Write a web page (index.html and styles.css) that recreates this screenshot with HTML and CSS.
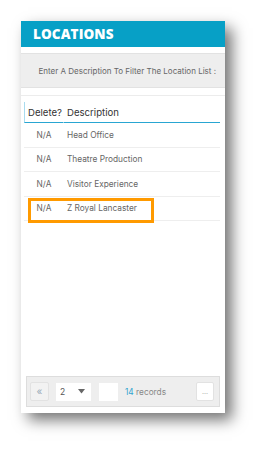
FILE: index.html
```html
<html>
<head>
<title>Locations</title>
<link rel="stylesheet" href="styles.css">
<meta http-equiv="Content-Type" content="text/html; charset=UTF-8">
</head>
<body>
<div class="panel">
  <div class="panel-title">LOCATIONS</div>
  <div class="filter-band">Enter A Description To Filter The Location List :</div>
  <div class="divider"></div>
  <div class="grid-wrap">
    <table class="grid">
      <tr class="grid-head">
        <th class="col-delete">Delete?</th>
        <th class="col-desc">Description</th>
      </tr>
      <tr><td class="cell-na">N/A</td><td class="cell-desc">Head Office</td></tr>
      <tr><td class="cell-na">N/A</td><td class="cell-desc">Theatre Production</td></tr>
      <tr><td class="cell-na">N/A</td><td class="cell-desc">Visitor Experience</td></tr>
      <tr><td class="cell-na">N/A</td><td class="cell-desc">Z Royal Lancaster</td></tr>
    </table>
    <div class="highlight"></div>
  </div>
  <div class="spacer"></div>
  <div class="pager">
    <div class="pager-btn first">&laquo;</div>
    <div class="pager-select">
      <span>2</span>
      <svg width="7" height="5" viewBox="0 0 7 5"><path d="M0 0 L7 0 L3.5 4.5 Z" fill="#666"/></svg>
    </div>
    <div class="pager-blank"></div>
    <div class="pager-count"><span class="count-num">14</span> records</div>
    <div class="pager-btn more">...</div>
  </div>
</div>
</body>
</html>
```

FILE: styles.css
```css
body {
 margin: 0;
 background: #ffffff;
 font-family: Inter, "Noto Sans", Arial, sans-serif;
}
.panel {
 margin: 21px 0 0 21px;
 width: 204px;
 height: 392px;
 background: #ffffff;
 box-shadow: 7px 7px 14px rgba(0,0,0,0.55);
 display: flex;
 flex-direction: column;
}
.panel-title {
 height: 26px;
 line-height: 27px;
 background: #07a0c6;
 color: #ffffff;
 font-family: "Open Sans", Inter, Arial, sans-serif;
 font-size: 13.5px;
 font-weight: 800;
 padding-left: 12px;
 letter-spacing: 0.1px;
}
.filter-band {
 margin-top: 6px;
 height: 33px;
 line-height: 34px;
 background: #eeeeee;
 border-top: 1px solid #e2e2e2;
 border-bottom: 1px solid #e2e2e2;
 color: #666666;
 font-size: 8px;
 text-align: right;
 padding-right: 9px;
}
.divider {
 margin-top: 7px;
 border-top: 1px solid #ececec;
}
.grid-wrap {
 position: relative;
 margin: 6px 5px 0 3px;
}
.grid {
 width: 100%;
 border-collapse: separate;
 border-spacing: 0;
}
.grid th {
 height: 21px;
 padding: 0;
 text-align: left;
 font-weight: normal;
 font-size: 9.6px;
 color: #333333;
 border-bottom: 1px solid #29a6d2;
}
.grid th.col-delete {
 width: 35px;
 padding-left: 3px;
 border-left: 1px solid #a9dcef;
 border-right: 1px solid #ffffff;
}
.grid th.col-desc {
 padding-left: 3px;
}
.grid td {
 height: 24.5px;
 padding: 0;
 font-size: 8.3px;
 color: #666666;
 border-bottom: 1px solid #eeeeee;
}
.grid td.cell-na {
 text-align: center;
}
.grid td.cell-desc {
 padding-left: 3px;
}
.highlight {
 position: absolute;
 left: 4px;
 top: 96px;
 width: 120px;
 height: 19px;
 border: 3px solid #ff9a00;
}
.spacer {
 flex: 1;
}
.pager {
 margin: 0 5px 6px 5px;
 height: 29px;
 background: #eeeeee;
 border: 1px solid #dddddd;
 display: flex;
 align-items: center;
 padding: 0 5px 0 3px;
 font-size: 8.3px;
 color: #888888;
}
.pager-btn {
 height: 17px;
 line-height: 17px;
 text-align: center;
 border: 1px solid #e2e2e2;
 border-radius: 2px;
}
.pager-btn.first {
 width: 17px;
 background: #f2f2f2;
 color: #9aaab8;
 font-size: 10px;
}
.pager-btn.more {
 width: 16px;
 background: #ffffff;
 margin-left: auto;
 color: #aaaaaa;
 font-size: 7px;
}
.pager-select {
 margin-left: 7px;
 width: 35px;
 height: 18px;
 background: #ffffff;
 display: flex;
 align-items: center;
 justify-content: space-between;
 padding: 0 6px 0 4px;
 box-sizing: border-box;
 color: #555555;
 font-size: 8.5px;
}
.pager-blank {
 margin-left: 8px;
 width: 19px;
 height: 18px;
 background: #ffffff;
}
.pager-count {
 margin-left: 7px;
 color: #888888;
}
.count-num {
 color: #2ea3d0;
}
```
